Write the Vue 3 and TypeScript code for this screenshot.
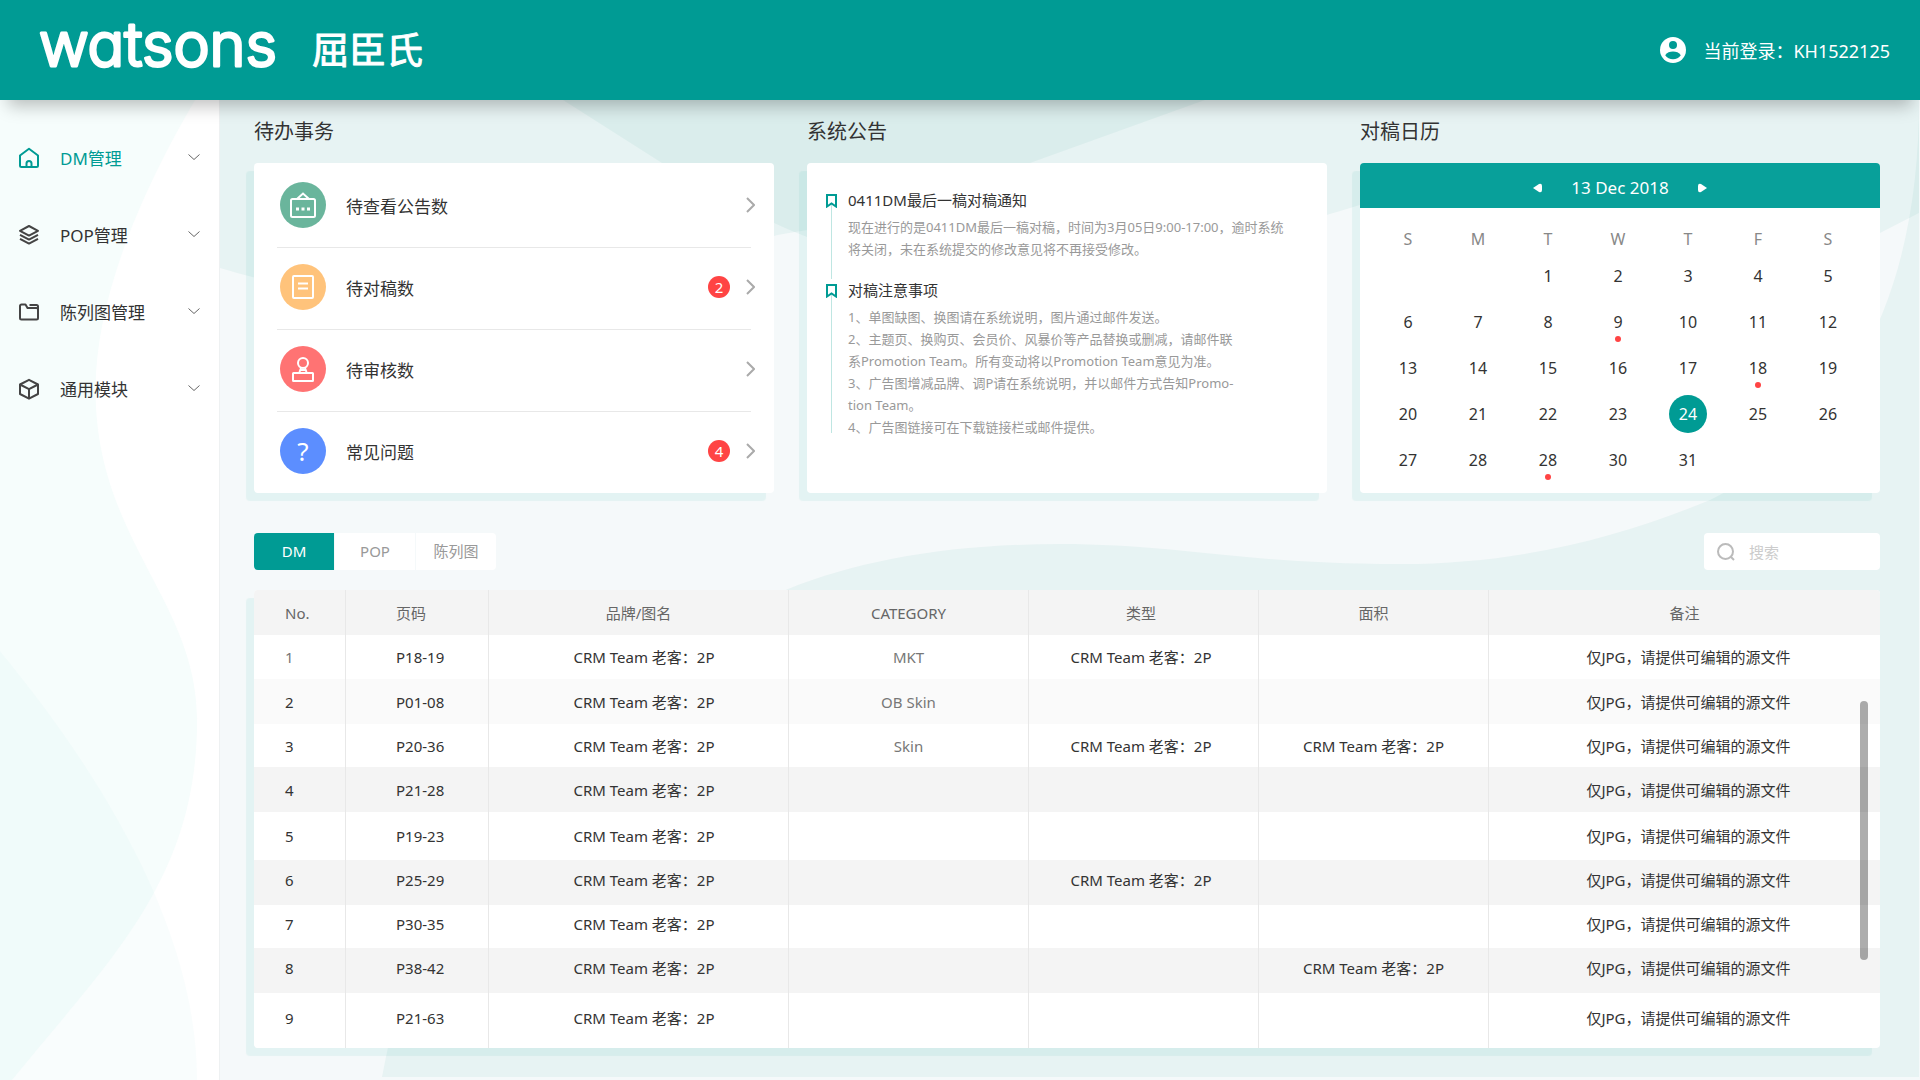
<script setup lang="ts">
import { ref } from 'vue'

type IconName = 'home' | 'layers' | 'folder' | 'box'

interface NavItem {
  label: string
  icon: IconName
}

interface Todo {
  label: string
  kind: 'notice' | 'draft' | 'audit' | 'faq'
  count?: number
}

interface Day {
  label: string
  marked?: boolean
}

interface Row {
  page: string
  category?: string
  type?: string
  area?: string
  tone?: 'light' | 'dark'
}

const navItems: NavItem[] = [
  { label: 'DM管理', icon: 'home' },
  { label: 'POP管理', icon: 'layers' },
  { label: '陈列图管理', icon: 'folder' },
  { label: '通用模块', icon: 'box' },
]
const activeNav = ref(0)

const todos: Todo[] = [
  { label: '待查看公告数', kind: 'notice' },
  { label: '待对稿数', kind: 'draft', count: 2 },
  { label: '待审核数', kind: 'audit' },
  { label: '常见问题', kind: 'faq', count: 4 },
]

const notices = [
  {
    title: '0411DM最后一稿对稿通知',
    lines: ['现在进行的是0411DM最后一稿对稿，时间为3月05日9:00-17:00，逾时系统', '将关闭，未在系统提交的修改意见将不再接受修改。'],
  },
  {
    title: '对稿注意事项',
    lines: [
      '1、单图缺图、换图请在系统说明，图片通过邮件发送。',
      '2、主题页、换购页、会员价、风暴价等产品替换或删减，请邮件联',
      '系Promotion Team。所有变动将以Promotion Team意见为准。',
      '3、广告图增减品牌、调P请在系统说明，并以邮件方式告知Promo-',
      'tion Team。',
      '4、广告图链接可在下载链接栏或邮件提供。',
    ],
  },
]

const weekdays = ['S', 'M', 'T', 'W', 'T', 'F', 'S']
const d = (label: string, marked = false): Day => ({ label, marked })
const weeks: Day[][] = [
  [d(''), d(''), d('1'), d('2'), d('3'), d('4'), d('5')],
  [d('6'), d('7'), d('8'), d('9', true), d('10'), d('11'), d('12')],
  [d('13'), d('14'), d('15'), d('16'), d('17'), d('18', true), d('19')],
  [d('20'), d('21'), d('22'), d('23'), d('24'), d('25'), d('26')],
  [d('27'), d('28'), d('28', true), d('30'), d('31'), d(''), d('')],
]
const selectedDay = ref('24')

const tabs = ['DM', 'POP', '陈列图']
const activeTab = ref('DM')
const keyword = ref('')

const brand = 'CRM Team 老客：2P'
const remark = '仅JPG，请提供可编辑的源文件'
const rows: Row[] = [
  { page: 'P18-19', category: 'MKT', type: brand },
  { page: 'P01-08', category: 'OB Skin', tone: 'light' },
  { page: 'P20-36', category: 'Skin', type: brand, area: brand },
  { page: 'P21-28', tone: 'dark' },
  { page: 'P19-23' },
  { page: 'P25-29', type: brand, tone: 'dark' },
  { page: 'P30-35' },
  { page: 'P38-42', area: brand, tone: 'dark' },
  { page: 'P21-63' },
]
</script>

<template>
  <div class="app">
    <header class="topbar">
      <svg class="logo" width="400" height="90" viewBox="0 0 400 90" role="img" aria-label="watsons 屈臣氏">
        <text class="logo-latin" x="0" y="61">watsons</text>
        <text class="logo-cjk" x="273" y="59">屈臣氏</text>
      </svg>
      <div class="user">
        <svg width="26" height="26" viewBox="0 0 26 26" aria-hidden="true">
          <circle cx="13" cy="13" r="13" fill="#fff" />
          <circle cx="13" cy="8" r="4" fill="#009b94" />
          <path d="M5.2 18.2C6.8 15.6 10 14.6 13 14.6s6.200 1 7.800 3.600C19 20.800 16.200 22.200 13 22.200s-6-1.400-7.800-4z" fill="#009b94" />
        </svg>
        <span>当前登录：KH1522125</span>
      </div>
    </header>

    <div class="body">
      <nav class="sidebar" aria-label="主导航">
        <svg class="backdrop" viewBox="0 0 220 980" preserveAspectRatio="none" aria-hidden="true">
          <path d="M0 0H196C150 78 96 190 96 290C96 440 198 500 198 620C198 780 110 860 12 980H0Z" fill="#f6fdfc" />
          <path d="M0 551C90 660 198 820 198 980H0Z" fill="#00aa96" fill-opacity=".025" />
        </svg>
        <button
          v-for="(item, i) in navItems"
          :key="item.label"
          type="button"
          class="nav-item"
          :class="{ active: i === activeNav }"
          @click="activeNav = i"
        >
          <svg class="nav-icon" width="24" height="24" viewBox="0 0 24 24" aria-hidden="true">
            <g v-if="item.icon === 'home'">
              <path d="M3 9.500L12 2.800l9 6.700V19.500a1.500 1.500 0 0 1-1.500 1.500h-15A1.500 1.500 0 0 1 3 19.500z" />
              <path d="M9.500 21v-3.500a2.500 2.500 0 0 1 5 0V21" />
            </g>
            <g v-else-if="item.icon === 'layers'">
              <path d="M12 3l9 4.800-9 4.800-9-4.800z" />
              <path d="M3 11.800l9 4.800 9-4.800M3 15.800l9 4.800 9-4.800" />
            </g>
            <g v-else-if="item.icon === 'folder'">
              <path d="M4.500 4.500H8.500l2 3.500h9A1.500 1.500 0 0 1 21 9.500v8.500a1.500 1.500 0 0 1-1.500 1.500h-15A1.500 1.500 0 0 1 3 18V6a1.500 1.500 0 0 1 1.500-1.500z" />
              <path d="M12.500 5H19.500A1.500 1.500 0 0 1 21 6.500V10" />
            </g>
            <g v-else>
              <path d="M12 2.800l9 4.700v9.500l-9 4.700-9-4.700V7.500z" />
              <path d="M3 7.500l9 4.700 9-4.700M12 12.200v9.500" />
            </g>
          </svg>
          <span>{{ item.label }}</span>
          <svg class="nav-caret" width="12" height="7" viewBox="0 0 12 7" aria-hidden="true">
            <path d="M0.500 0.500L6 5.500L11.500 0.500" />
          </svg>
        </button>
      </nav>

      <main class="content">
        <svg class="backdrop" viewBox="0 0 1700 980" preserveAspectRatio="none" aria-hidden="true">
          <g fill="#009682" fill-opacity=".055">
            <path d="M0 0H985L810 63L640 118C600 130 575 131 554 136C400 190 200 230 0 168Z" />
            <path d="M343 0L442 63Q540 120 587 137C760 210 960 160 1140 105C1300 50 1440 250 1660 133L1699 113V0Z" />
            <path d="M568 489C640 460 730 444 840 444C960 444 1020 464 1180 464C1300 464 1400 437 1490 400C1640 325 1699 180 1699 0V977H162C200 780 260 610 568 489Z" />
          </g>
        </svg>

        <div class="cards">
          <section>
            <h2>待办事务</h2>
            <ul class="card todo">
              <li v-for="t in todos" :key="t.label">
                <span class="todo-icon" :class="t.kind">
                  <svg v-if="t.kind === 'notice'" width="26" height="30" viewBox="0 0 26 30" aria-hidden="true">
                    <rect x="1" y="9" width="24" height="18" rx="1.500" />
                    <path d="M7 9L13 3.500L19 9" />
                    <path d="M6 19h3M11.500 19h3M17 19h3" stroke-width="3" />
                  </svg>
                  <svg v-else-if="t.kind === 'draft'" width="24" height="24" viewBox="0 0 24 24" aria-hidden="true">
                    <rect x="2" y="1" width="20" height="22" rx="1" />
                    <path d="M7 8.500h10M7 13.500h10" />
                  </svg>
                  <svg v-else-if="t.kind === 'audit'" width="24" height="28" viewBox="0 0 24 28" aria-hidden="true">
                    <circle cx="12" cy="8" r="5" />
                    <path d="M10 13l-1.500 4M14 13l1.500 4M9 15h6" />
                    <rect x="2" y="18" width="20" height="8" rx="0.500" />
                  </svg>
                  <template v-else>?</template>
                </span>
                <a href="#">{{ t.label }}</a>
                <span v-if="t.count" class="badge">{{ t.count }}</span>
                <svg class="todo-caret" width="9" height="16" viewBox="0 0 9 16" aria-hidden="true">
                  <path d="M1 1L8 8L1 15" />
                </svg>
              </li>
            </ul>
          </section>

          <section>
            <h2>系统公告</h2>
            <div class="card notice">
              <article v-for="n in notices" :key="n.title">
                <svg class="bookmark" width="11" height="14" viewBox="0 0 11 14" aria-hidden="true">
                  <path d="M1 1H10V12.500L5.500 9.500L1 12.500Z" />
                </svg>
                <div>
                  <h3>{{ n.title }}</h3>
                  <p>
                    <span v-for="line in n.lines" :key="line">{{ line }}</span>
                  </p>
                </div>
              </article>
            </div>
          </section>

          <section>
            <h2>对稿日历</h2>
            <div class="card calendar">
              <div class="cal-head">
                <button type="button" aria-label="上一天">
                  <svg width="9" height="10" viewBox="0 0 9 10" aria-hidden="true"><path d="M0 5L6 1Q9 0 9 3V7Q9 10 6 9Z" /></svg>
                </button>
                <span>13 Dec 2018</span>
                <button type="button" aria-label="下一天">
                  <svg width="9" height="10" viewBox="0 0 9 10" aria-hidden="true"><path d="M9 5L3 1Q0 0 0 3V7Q0 10 3 9Z" /></svg>
                </button>
              </div>
              <table class="cal-grid">
                <thead>
                  <tr>
                    <th v-for="(w, i) in weekdays" :key="i" scope="col">{{ w }}</th>
                  </tr>
                </thead>
                <tbody>
                  <tr v-for="(week, i) in weeks" :key="i">
                    <td v-for="(day, j) in week" :key="j">
                      <button
                        v-if="day.label"
                        type="button"
                        :class="{ selected: day.label === selectedDay, marked: day.marked }"
                        @click="selectedDay = day.label"
                      >
                        {{ day.label }}
                      </button>
                    </td>
                  </tr>
                </tbody>
              </table>
            </div>
          </section>
        </div>

        <div class="toolbar">
          <div class="tabs">
            <button
              v-for="tab in tabs"
              :key="tab"
              type="button"
              :class="{ active: tab === activeTab }"
              @click="activeTab = tab"
            >
              {{ tab }}
            </button>
          </div>
          <label class="search">
            <svg width="18" height="18" viewBox="0 0 18 18" aria-hidden="true">
              <circle cx="8.500" cy="8.500" r="7.500" />
              <path d="M13.500 13.500L17 17" />
            </svg>
            <input v-model="keyword" type="search" placeholder="搜索" aria-label="搜索" />
          </label>
        </div>

        <div class="table-wrap">
          <table class="data">
            <colgroup>
              <col class="c-no" />
              <col class="c-page" />
              <col class="c-brand" />
              <col class="c-category" />
              <col class="c-type" />
              <col class="c-area" />
              <col />
            </colgroup>
            <thead>
              <tr>
                <th scope="col">No.</th>
                <th scope="col">页码</th>
                <th scope="col">品牌/图名</th>
                <th scope="col">CATEGORY</th>
                <th scope="col">类型</th>
                <th scope="col">面积</th>
                <th scope="col">备注</th>
              </tr>
            </thead>
            <tbody>
              <tr v-for="(row, i) in rows" :key="row.page" :class="row.tone">
                <td>{{ i + 1 }}</td>
                <td>{{ row.page }}</td>
                <td>{{ brand }}</td>
                <td class="muted">{{ row.category }}</td>
                <td>{{ row.type }}</td>
                <td>{{ row.area }}</td>
                <td>{{ remark }}</td>
              </tr>
            </tbody>
          </table>
          <div class="scroll-thumb" aria-hidden="true"></div>
        </div>
      </main>
    </div>
  </div>
</template>

<style>
body {
  margin: 0;
  background: #f5f9fa;
}
</style>

<style scoped>
.app {
  display: flex;
  flex-direction: column;
  min-height: 100vh;
  color: #333;
  font-family: 'Noto Sans', 'Noto Sans CJK SC', sans-serif;
  font-size: 15px;
}

button {
  padding: 0;
  border: 0;
  background: none;
  color: inherit;
  font: inherit;
  cursor: pointer;
}

h2,
h3,
p,
ul {
  margin: 0;
  padding: 0;
  font-weight: 400;
}

.backdrop {
  position: absolute;
  inset: 0;
  z-index: -1;
  width: 100%;
  height: 100%;
}

/* Top bar */
.topbar {
  position: relative;
  z-index: 2;
  display: flex;
  align-items: center;
  justify-content: space-between;
  box-sizing: border-box;
  height: 100px;
  padding: 0 30px 0 39px;
  background: #009b94;
  box-shadow: 0 14px 16px -8px rgba(0, 0, 0, 0.25);
  color: #fff;
}

.logo text {
  fill: #fff;
  stroke: #fff;
  stroke-linejoin: round;
}

.logo-latin {
  font-family: Inter, sans-serif;
  font-size: 61px;
  font-weight: 300;
  font-feature-settings: 'cv11';
  stroke-width: 3px;
}

.logo-cjk {
  font-family: 'Noto Sans CJK SC', sans-serif;
  font-size: 37px;
  font-weight: 400;
  stroke-width: 1px;
}

.user {
  display: flex;
  align-items: center;
  gap: 17px;
  font-size: 18px;
}

/* Side navigation */
.body {
  display: flex;
  flex: 1;
}

.sidebar {
  position: relative;
  z-index: 0;
  flex: 0 0 220px;
  box-sizing: border-box;
  padding-top: 19px;
  border-right: 1px solid #eef1f2;
  background: #fff;
}

.nav-item {
  display: flex;
  align-items: center;
  width: 100%;
  height: 77px;
  padding: 0 19px 0 17px;
  font-size: 17px;
}

.nav-item.active {
  color: #009b94;
}

.nav-icon {
  margin-right: 19px;
  fill: none;
  stroke: #444;
  stroke-width: 2;
  stroke-linejoin: round;
}

.active .nav-icon {
  stroke: #009b94;
}

.nav-caret {
  margin-left: auto;
  fill: none;
  stroke: #666;
}

/* Content */
.content {
  position: relative;
  z-index: 0;
  flex: 1;
  min-width: 0;
  padding: 18px 40px 32px 34px;
}

.cards {
  display: grid;
  grid-template-columns: repeat(3, minmax(0, 1fr));
  gap: 33px;
}

h2 {
  margin-bottom: 17px;
  font-size: 20px;
  line-height: 28px;
}

.card {
  box-sizing: border-box;
  height: 330px;
  border-radius: 4px;
  background: #fff;
  box-shadow: -8px 8px 1px rgba(0, 170, 150, 0.07);
}

/* To-do list */
.todo {
  padding-top: 1px;
  list-style: none;
}

.todo li {
  position: relative;
  display: flex;
  align-items: center;
  height: 82px;
  padding: 0 19px 0 26px;
  font-size: 17px;
}

.todo li:not(:last-child)::after {
  position: absolute;
  right: 23px;
  bottom: -2px;
  left: 23px;
  height: 1px;
  background: #e8e8e8;
  content: '';
}

.todo a {
  margin-left: 20px;
  color: inherit;
  text-decoration: none;
}

.todo-icon {
  display: flex;
  align-items: center;
  justify-content: center;
  width: 46px;
  height: 46px;
  border-radius: 50%;
  color: #fff;
  font-size: 26px;
}

.todo-icon svg {
  fill: none;
  stroke: #fff;
  stroke-width: 2;
}

.notice.todo-icon {
  background: #6ab59c;
}

.draft {
  background: #ffc37b;
}

.audit {
  background: #ff7373;
}

.faq {
  background: #5c8eff;
}

.badge {
  width: 22px;
  height: 22px;
  margin-left: auto;
  border-radius: 50%;
  background: #ff4444;
  color: #fff;
  font-size: 15px;
  line-height: 22px;
  text-align: center;
}

.todo-caret {
  margin-left: auto;
  fill: none;
  stroke: #aaa;
  stroke-width: 2;
}

.badge + .todo-caret {
  margin-left: 16px;
}

/* Announcements */
.card.notice {
  padding: 26px 19px 0;
}

.notice article {
  position: relative;
  display: flex;
  gap: 11px;
  padding-bottom: 19px;
}

.notice article::before {
  position: absolute;
  top: 16px;
  bottom: 0;
  left: 5px;
  width: 1px;
  background: #bfe6e2;
  content: '';
}

.notice article:last-child {
  padding-bottom: 0;
}

.notice article:last-child::before {
  bottom: 5px;
}

.bookmark {
  position: relative;
  flex: none;
  margin-top: 5px;
  fill: #fff;
  stroke: #009b94;
  stroke-width: 2;
}

.notice h3 {
  margin-bottom: 5px;
  font-size: 15px;
  line-height: 22px;
}

.notice p {
  color: #999;
  font-size: 13px;
  line-height: 22px;
}

.notice p span {
  display: block;
}

/* Calendar */
.cal-head {
  display: flex;
  align-items: center;
  justify-content: center;
  gap: 29px;
  box-sizing: border-box;
  height: 45px;
  padding-top: 4px;
  border-radius: 4px 4px 0 0;
  background: #08a09a;
  color: #fff;
  font-size: 17px;
}

.cal-head svg {
  display: block;
  fill: #fff;
}

.cal-grid {
  width: calc(100% - 30px);
  margin: 17px 17px 0 13px;
  border-collapse: collapse;
  table-layout: fixed;
  font-size: 16px;
}

.cal-grid th {
  height: 28px;
  padding: 0;
  color: #888;
  font-weight: 400;
}

.cal-grid td {
  height: 46px;
  padding: 0;
  text-align: center;
}

.cal-grid button {
  position: relative;
  display: block;
  width: 38px;
  height: 38px;
  margin: 0 auto;
  border-radius: 50%;
}

.cal-grid .selected {
  background: #009b94;
  color: #fff;
}

.cal-grid .marked::after {
  position: absolute;
  bottom: -1px;
  left: 16px;
  width: 6px;
  height: 6px;
  border-radius: 50%;
  background: #ff4444;
  content: '';
}

/* Toolbar */
.toolbar {
  display: flex;
  justify-content: space-between;
  margin: 40px 0 20px;
}

.tabs {
  display: flex;
  gap: 1px;
  overflow: hidden;
  border-radius: 4px;
}

.tabs button {
  width: 80px;
  height: 37px;
  padding-bottom: 2px;
  background: #fff;
  color: #999;
}

.tabs .active {
  background: #009b94;
  color: #fff;
}

.search {
  display: flex;
  align-items: center;
  gap: 14px;
  box-sizing: border-box;
  width: 176px;
  height: 37px;
  padding: 0 13px;
  border-radius: 4px;
  background: #fff;
}

.search svg {
  flex: none;
  fill: none;
  stroke: #bbb;
  stroke-width: 2;
}

.search input {
  flex: 1;
  min-width: 0;
  padding: 0;
  border: 0;
  outline: 0;
  background: none;
  color: #333;
  font: inherit;
}

.search input::placeholder {
  color: #ccc;
}

/* Data table */
.table-wrap {
  position: relative;
  border-radius: 4px;
  box-shadow: -8px 8px 1px rgba(0, 170, 150, 0.07);
}

.data {
  width: 100%;
  overflow: hidden;
  border-radius: 4px;
  border-spacing: 0;
  background: #fff;
  table-layout: fixed;
}

.c-no {
  width: 92px;
}

.c-page {
  width: 143px;
}

.c-brand {
  width: 300px;
}

.c-category {
  width: 240px;
}

.c-type,
.c-area {
  width: 230px;
}

.data th,
.data td {
  box-sizing: border-box;
  height: 45px;
  padding: 0;
  border-right: 1px solid #e8e8e8;
  font-weight: 400;
  line-height: 22px;
  text-align: center;
}

.data th {
  background: #f4f4f4;
  color: #666;
}

.data th:first-child,
.data td:first-child {
  padding-left: 31px;
  text-align: left;
}

.data th:nth-child(2),
.data td:nth-child(2) {
  padding-left: 50px;
  text-align: left;
}

.data td:nth-child(3) {
  padding-left: 11px;
}

.data th:nth-child(5),
.data td:nth-child(5) {
  padding-right: 5px;
}

.data td:last-child {
  padding-left: 8px;
}

.data th:last-child,
.data td:last-child {
  border-right: 0;
}

.data .muted,
.data tbody tr:first-child td:first-child {
  color: #777;
}

.data .light {
  background: #fafafa;
}

.data .dark {
  background: #f4f4f4;
}

.data tbody tr:nth-child(n + 6) td {
  padding-bottom: 5px;
}

.data tbody tr:nth-child(1) td {
  height: 44px;
}

.data tbody tr:nth-child(4n + 3) td {
  height: 43px;
}

.data tbody tr:nth-child(5) td {
  height: 48px;
}

.data tbody tr:nth-child(9) td {
  height: 55px;
}

.scroll-thumb {
  position: absolute;
  top: 111px;
  right: 12px;
  width: 8px;
  height: 259px;
  border-radius: 4px;
  background: rgba(0, 0, 0, 0.32);
}
</style>
